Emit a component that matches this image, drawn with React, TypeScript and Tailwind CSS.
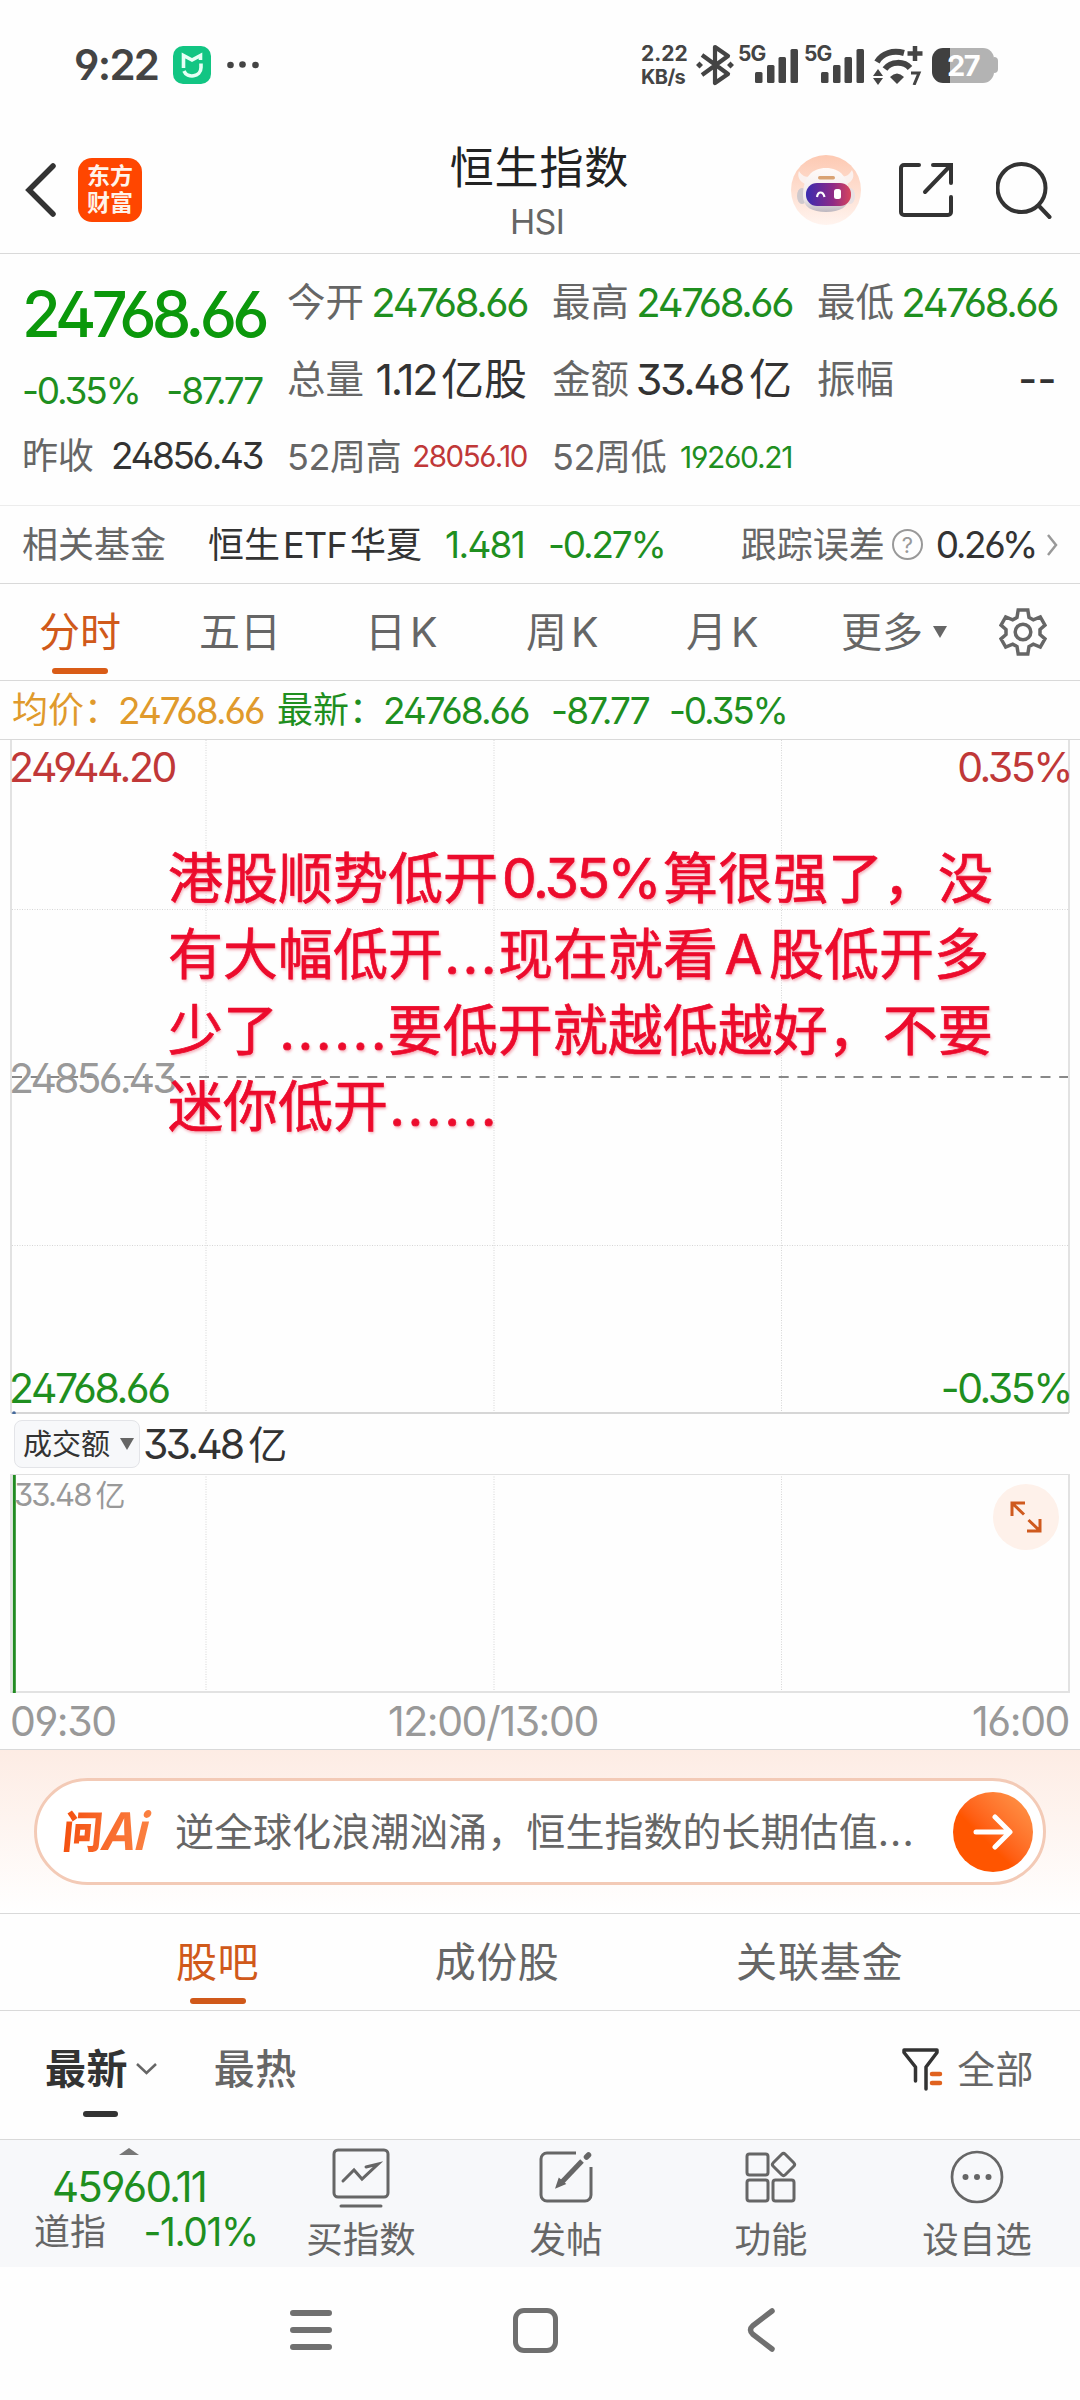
import type { ReactNode } from 'react';
import clsx from 'clsx';

type CellProps = {
  label: string;
  children: ReactNode;
  className?: string;
  small?: boolean;
};

const periods = [
  { label: '日', className: 'w-[161px]' },
  { label: '周', className: 'w-[160px]' },
  { label: '月', className: 'w-[155px]' },
];

function StatusBar() {
  return (
    <div className="flex h-[130px] items-center pl-[74px] pr-[82px] text-[#444]">
      <span className="w-[99px] text-[42px] font-semibold tracking-[-0.04em]">9:22</span>
      <svg className="h-[38px] w-[38px]" viewBox="0 0 38 38">
        <rect width="38" height="38" rx="10" fill="#12c583" />
        <path d="M10.500 22V9.500l8.500 4.500 8.500-4.500V14" fill="none" stroke="#e6fff5" strokeWidth="3.600" />
        <path d="M28 17.500v4c0 10-14 11-17 3.500" fill="none" stroke="#e6fff5" strokeWidth="3.600" />
      </svg>
      <svg className="ml-4 h-[8px] w-[32px]" viewBox="0 0 32 8" fill="currentColor">
        <circle cx="3.500" cy="4" r="3.300" />
        <circle cx="15.500" cy="3.500" r="3.300" />
        <circle cx="28.500" cy="4" r="3.300" />
      </svg>

      <div className="ml-auto flex items-center">
        <div className="flex w-[55px] flex-col gap-[3px] whitespace-nowrap font-bold">
          <span className="text-[21px]">2.22</span>
          <span className="text-[20px] tracking-[-0.03em]">KB/s</span>
        </div>
        <svg className="h-[42px] w-[38px]" viewBox="0 0 38 42" fill="none" stroke="currentColor" strokeWidth="4.200" strokeLinejoin="round">
          <path d="M6 11l26 19-13 9V3l13 9L6 31" />
          <path d="M0 21l3.500-3.500L7 21l-3.500 3.500zM31 21l3.500-3.500L38 21l-3.500 3.500z" fill="currentColor" stroke="none" />
        </svg>
        <Signal className="ml-[4px] w-[60px]" />
        <Signal className="ml-[6px] w-[60px]" />
        <svg className="ml-[9px] h-[40px] w-[50px]" viewBox="0 0 50 40" fill="none" stroke="currentColor">
          <path d="M4 17C9 8 20 5 31 8" strokeWidth="6" />
          <path d="M12 24c6-8 19-8 25-1" strokeWidth="6" />
          <path d="M17 32q7-7 14 0l-7 7z" fill="currentColor" stroke="none" />
          <path d="M42 1v15M34.500 8.500h15" strokeWidth="4.500" />
          <path d="M0 31l5-7 5 7zM0 33l5 7 5-7z" fill="currentColor" stroke="none" />
          <path d="M38 28h8l-5 12" strokeWidth="3" />
        </svg>
        <div className="ml-[9px] flex items-center">
          <div className="flex h-[35px] w-[62px] items-center justify-center rounded-[11px] bg-[linear-gradient(90deg,#404040_0_18px,#b3b3b3_18px)] text-[29px] font-bold tracking-[-0.05em] text-white">
            27
          </div>
          <div className="h-4 w-[4px] rounded-r-sm bg-[#b3b3b3]" />
        </div>
      </div>
    </div>
  );
}

function Signal({ className }: { className: string }) {
  return (
    <div className={clsx('relative h-[38px]', className)}>
      <span className="absolute left-0 top-[-3px] text-[21px] font-bold tracking-[-0.04em]">5G</span>
      <svg className="h-[38px] w-[60px]" viewBox="0 0 60 38" fill="currentColor">
        <rect x="17" y="26" width="7.500" height="11" rx="1.500" />
        <rect x="29" y="19" width="7.500" height="18" rx="1.500" />
        <rect x="40.500" y="11" width="7.500" height="26" rx="1.500" />
        <rect x="52.500" y="3" width="7.500" height="34" rx="1.500" />
      </svg>
    </div>
  );
}

function Robot() {
  return (
    <svg className="h-[72px] w-[72px]" viewBox="0 0 72 72">
      <defs>
        <linearGradient id="halo" x1="0" y1="0" x2="0" y2="1">
          <stop offset="0" stopColor="#fdc9b2" />
          <stop offset="1" stopColor="#fff4ef" />
        </linearGradient>
        <linearGradient id="visor" x1="0" y1="0" x2="1" y2="0">
          <stop offset="0" stopColor="#3a2cb0" />
          <stop offset="0.600" stopColor="#8e2a86" />
          <stop offset="1" stopColor="#d8455c" />
        </linearGradient>
        <linearGradient id="shell" x1="0" y1="0" x2="0" y2="1">
          <stop offset="0" stopColor="#fffaf8" />
          <stop offset="0.700" stopColor="#efe9ea" />
          <stop offset="1" stopColor="#bdb7bf" />
        </linearGradient>
      </defs>
      <circle cx="36" cy="36" r="35" fill="url(#halo)" />
      <path d="M15 30c-6-3-8-8-6-13 3 5 6 6 12 6zM57 30c6-3 8-8 5-14-3 5-6 7-12 7z" fill="#fbf1ee" />
      <ellipse cx="12" cy="42" rx="5" ry="8" fill="#cfc9cd" />
      <ellipse cx="60" cy="42" rx="5" ry="8" fill="#e8e0e2" />
      <path d="M13 42c0-19 9-28 23-28s23 9 23 28c0 11-9 16-23 16s-23-5-23-16z" fill="url(#shell)" />
      <rect x="28" y="22" width="17" height="3.500" rx="1.700" fill="#d9a273" />
      <rect x="16" y="29" width="45" height="23" rx="11" fill="url(#visor)" />
      <path d="M27 43c1-6 6-6 7.500 0" fill="none" stroke="#fff" strokeWidth="2.200" />
      <rect x="44" y="35" width="7" height="10" rx="2.500" fill="#fff" />
    </svg>
  );
}

function Header() {
  return (
    <header className="flex h-[124px] items-center border-b border-[#d9d9d9] pb-[3px] pl-[25px] pr-[28px]">
      <svg className="h-[54px] w-[32px]" viewBox="0 0 32 54" fill="none" stroke="#333" strokeWidth="5.500">
        <path d="M28 3L4 27l24 24" strokeLinecap="round" />
      </svg>
      <div className="ml-[21px] flex h-[64px] w-[64px] flex-col items-center justify-center gap-[4px] rounded-[14px] bg-[#ff4600] text-[23px] font-bold text-[#fff3ea]">
        <span>东方</span>
        <span>财富</span>
      </div>
      <div className="ml-[309px] flex w-[177px] flex-col items-center whitespace-nowrap pt-[5px]">
        <h1 className="text-[44px] tracking-[0.02em] text-[#222]">恒生指数</h1>
        <span className="mt-[15px] pr-[5px] text-[34px] tracking-[-0.02em] text-[#666]">HSI</span>
      </div>
      <div className="ml-auto flex items-center">
        <Robot />
        <svg className="ml-[37px] h-[54px] w-[54px]" viewBox="0 0 54 54" fill="none" stroke="#333" strokeWidth="4" strokeLinecap="round">
          <path d="M20 2H5a3 3 0 0 0-3 3v44a3 3 0 0 0 3 3h44a3 3 0 0 0 3-3V34" />
          <path d="M34 2h18v18M26 29L50 4" />
        </svg>
        <svg className="ml-[43px] h-[57px] w-[56px]" viewBox="0 0 56 57" fill="none" stroke="#333" strokeWidth="4" strokeLinecap="round">
          <circle cx="25.500" cy="26" r="24" />
          <path d="M43 44l10.500 11" />
        </svg>
      </div>
    </header>
  );
}

function Cell({ label, children, className, small }: CellProps) {
  return (
    <div className={clsx('flex h-[77px] items-center justify-between whitespace-nowrap', className)}>
      <span className={clsx('text-[#666]', small ? 'text-[36px] tracking-[-0.01em]' : 'text-[38.500px]')}>{label}</span>
      {children}
    </div>
  );
}

function Quote() {
  return (
    <section className="grid h-[252px] grid-cols-4 gap-[25px] border-b border-[#ececec] pl-[22px] pr-[23px] pt-[10px] text-[#333]">
      <div>
        <div className="flex h-[100px] items-center text-[63px] font-medium tracking-[-0.075em] text-[#0b980b]">24768.66</div>
        <div className="flex h-[53px] items-center justify-between text-[37px] tracking-[-0.06em] text-[#1f8f1f]">
          <span>-0.35%</span>
          <span>-87.77</span>
        </div>
        <Cell label="昨收" small>
          <span className="text-[37px] tracking-[-0.065em]">24856.43</span>
        </Cell>
      </div>
      <div>
        <Cell label="今开">
          <span className="text-[40px] tracking-[-0.06em] text-[#1f8f1f]">24768.66</span>
        </Cell>
        <Cell label="总量">
          <span className="text-[43px] tracking-[-0.055em]">
            1.12<span className="ml-[5px] tracking-normal">亿股</span>
          </span>
        </Cell>
        <Cell label="52周高" small>
          <span className="text-[29.500px] tracking-[-0.05em] text-[#c03838]">28056.10</span>
        </Cell>
      </div>
      <div>
        <Cell label="最高">
          <span className="text-[40px] tracking-[-0.06em] text-[#1f8f1f]">24768.66</span>
        </Cell>
        <Cell label="金额">
          <span className="text-[43px] tracking-[-0.055em]">
            33.48<span className="ml-[6px] tracking-normal">亿</span>
          </span>
        </Cell>
        <Cell label="52周低" small>
          <span className="text-[30px] tracking-[-0.045em] text-[#1f8f1f]">19260.21</span>
        </Cell>
      </div>
      <div>
        <Cell label="最低">
          <span className="text-[40px] tracking-[-0.06em] text-[#1f8f1f]">24768.66</span>
        </Cell>
        <Cell label="振幅">
          <span className="text-[41px] font-medium tracking-[0.01em]">--</span>
        </Cell>
      </div>
    </section>
  );
}

function FundRow() {
  return (
    <div className="flex h-[78px] items-center whitespace-nowrap border-b border-[#d9d9d9] pl-[22px] pr-[22px] text-[36px] text-[#333]">
      <span className="w-[186px] text-[#666]">相关基金</span>
      <span className="w-[237px]">
        恒生<span className="px-[3px] tracking-[-0.02em]">ETF</span>华夏
      </span>
      <span className="w-[103px] text-[37px] tracking-[-0.045em] text-[#1f8f1f]">1.481</span>
      <span className="text-[37px] tracking-[-0.06em] text-[#1f8f1f]">-0.27%</span>
      <span className="ml-auto text-[#666]">跟踪误差</span>
      <span className="ml-[7px] flex h-[31px] w-[31px] items-center justify-center rounded-full border-[2.500px] border-[#999] text-[22px] text-[#999]">?</span>
      <span className="ml-[13px] text-[37px] tracking-[-0.065em]">0.26%</span>
      <svg className="ml-[11px] h-[22px] w-[11px]" viewBox="0 0 11 22" fill="none" stroke="#999" strokeWidth="2.500">
        <path d="M1 1l8 10-8 10" />
      </svg>
    </div>
  );
}

function PeriodTabs() {
  return (
    <nav className="flex h-[97px] items-center whitespace-nowrap border-b border-[#d9d9d9] pl-[39px] text-[41px] text-[#666]">
      <div className="relative text-[#d0591a]">
        分时
        <span className="absolute left-[13px] top-[56px] h-[6px] w-[56px] rounded-full bg-[#d95c17]" />
      </div>
      <span className="ml-[78px] w-[166px]">五日</span>
      {periods.map((p) => (
        <span key={p.label} className={p.className}>
          {p.label}
          <span className="ml-[4px]">K</span>
        </span>
      ))}
      <span>更多</span>
      <svg className="ml-[10px] h-[12px] w-[14px]" viewBox="0 0 14 12" fill="#666">
        <path d="M0 0h14L7 12z" />
      </svg>
      <svg className="ml-[52px] h-[48px] w-[48px]" viewBox="0 0 48 48" fill="none" stroke="#666" strokeWidth="3.500">
        <path d="M19.200 2h9.600l1.200 7.500 4.300 2.400 7-2.900 4.700 8.200-5 4.300v5l5 4.300-4.700 8.200-7-2.900-4.300 2.400-1.200 7.500h-9.600L18 38.500l-4.300-2.400-7 2.900L2 30.800l5-4.300v-5l-5-4.300L6.700 9l7 2.900L18 9.500z" />
        <circle cx="24" cy="24" r="7.800" />
      </svg>
    </nav>
  );
}

function PriceChart() {
  return (
    <div className="relative mx-[10px] h-[674px] text-[41px] tracking-[-0.06em]">
      <svg className="block h-full w-full" viewBox="0 0 1060 674" fill="none">
        <g stroke="#d6d6d6" strokeDasharray="1 1.500">
          <path d="M196 0v672M484 0v672M771.500 0v672M2 169.500h1056M2 505.500h1056" />
        </g>
        <path d="M2 337h1056" stroke="#888" strokeWidth="2" strokeDasharray="10 8.700" />
        <path d="M1 0v673M1059 0v673" stroke="#e2e2e2" strokeWidth="2" />
        <path d="M1 673h1058" stroke="#d6d6d6" strokeWidth="2" />
        <circle cx="4" cy="673" r="1.800" fill="#456a9c" />
      </svg>
      <span className="absolute left-[-1px] top-[7px] text-[#c03838]">24944.20</span>
      <span className="absolute right-[-1px] top-[7px] text-[#c03838]">0.35%</span>
      <span className="absolute left-[-1px] top-[318px] tracking-[-0.07em] text-[#999]">24856.43</span>
      <span className="absolute left-[-1px] top-[628px] text-[#1f8f1f]">24768.66</span>
      <span className="absolute right-[-1px] top-[628px] text-[#1f8f1f]">-0.35%</span>

      <div className="absolute left-[158px] top-[100px] whitespace-nowrap text-[55px] leading-[76px] tracking-normal text-[#ec0b2c] [-webkit-text-stroke:0.700px_#ec0b2c] [text-shadow:1px_2px_3px_#f3a9b4]">
        <p>
          港股顺势低开<span className="inline-block w-[165px] text-center tracking-[-0.045em]">0.35%</span>算很强了，没
        </p>
        <p>
          有大幅低开
          <Dots count={3} />
          现在就看<span className="inline-block w-[51px] text-center">A</span>股低开多
        </p>
        <p>
          少了
          <Dots count={6} />
          要低开就越低越好，不要
        </p>
        <p>
          迷你低开
          <Dots count={6} />
        </p>
      </div>
    </div>
  );
}

function Dots({ count }: { count: number }) {
  return (
    <span className="inline-flex">
      {Array.from({ length: count }, (_, i) => (
        <span key={i} className="w-[18.300px] text-center">
          .
        </span>
      ))}
    </span>
  );
}

function VolumeChart() {
  return (
    <section>
      <div className="flex h-[60px] items-center pl-[14px] text-[#333]">
        <button className="flex h-[48px] w-[126px] items-center gap-[10px] rounded-lg border border-[#e3e4e8] bg-[#f7f8fa] pl-[8px] text-[29px]">
          <span>成交额</span>
          <svg className="h-[12px] w-[14px]" viewBox="0 0 14 12" fill="#666">
            <path d="M0 0h14L7 12z" />
          </svg>
        </button>
        <span className="ml-[3px] whitespace-nowrap text-[41px] tracking-[-0.07em]">
          33.48<span className="ml-[6px] text-[39px]">亿</span>
        </span>
      </div>
      <div className="relative mx-[10px] h-[219px]">
        <svg className="block h-full w-full" viewBox="0 0 1060 219" fill="none">
          <path d="M196 0v217M484 0v217M771.500 0v217" stroke="#d6d6d6" strokeDasharray="1 1.500" />
          <path d="M1 .5h1058" stroke="#e0e0e0" />
          <path d="M1 0v218h1058V0" stroke="#e2e2e2" strokeWidth="2" />
          <path d="M4.300 1v218" stroke="#228b22" strokeWidth="3" />
        </svg>
        <span className="absolute left-[4px] top-[5px] whitespace-nowrap text-[31px] tracking-[-0.06em] text-[#999]">
          33.48<span className="ml-[5px] text-[30px]">亿</span>
        </span>
        <div className="absolute right-[11px] top-[10px] flex h-[66px] w-[66px] items-center justify-center rounded-full bg-[#fef1ea]">
          <svg className="h-[32px] w-[32px]" viewBox="0 0 32 32" fill="none" stroke="#cf5a1e" strokeWidth="3">
            <path d="M2 15V2h13M2.500 2.500L14 13.500M30 18v12H17M29.500 29.500L18.500 19" />
          </svg>
        </div>
      </div>
      <div className="flex h-[57px] items-center border-b border-[#d9d9d9] pl-[10px] pr-[11px] text-[41px] tracking-[-0.035em] text-[#999]">
        <span className="w-[378px]">09:30</span>
        <span>12:00/13:00</span>
        <span className="ml-auto">16:00</span>
      </div>
    </section>
  );
}

function AskAi() {
  return (
    <section className="flex h-[164px] items-center border-b border-[#d9d9d9] bg-gradient-to-b from-[#fdece4] to-white px-[34px]">
      <div className="flex h-[107px] w-full items-center rounded-full border-[3px] border-[#f3cab6] bg-white pl-[26px] pr-[10px]">
        <div className="w-[112px]">
          <span className="inline-flex origin-left scale-x-90 -skew-x-6 items-center bg-gradient-to-r from-[#f4500c] to-[#fb8242] bg-clip-text text-transparent">
            <span className="text-[44px] font-black">问</span>
            <span className="pr-1 text-[52px] font-bold italic tracking-[-0.03em]">Ai</span>
          </span>
        </div>
        <span className="whitespace-nowrap text-[39px] tracking-[0.001em] text-[#666]">
          逆全球化浪潮汹涌，恒生指数的长期估值<span className="tracking-[0.03em]">...</span>
        </span>
        <span className="ml-auto flex h-[80px] w-[80px] items-center justify-center rounded-full bg-gradient-to-tr from-[#ff5500] from-40% to-[#ff9a4d]">
          <svg className="h-[36px] w-[40px]" viewBox="0 0 40 36" fill="none" stroke="#fff" strokeWidth="5" strokeLinecap="round" strokeLinejoin="round">
            <path d="M3 18h33M22 3l15 15-15 15" />
          </svg>
        </span>
      </div>
    </section>
  );
}

function Community() {
  return (
    <section className="whitespace-nowrap text-[41px] tracking-[0.01em] text-[#666]">
      <div className="flex h-[97px] items-center border-b border-[#d9d9d9] pl-[176px]">
        <div className="relative text-[#d0591a]">
          股吧
          <span className="absolute left-[14px] top-[56px] h-[6px] w-[56px] rounded-full bg-[#d0591a]" />
        </div>
        <span className="ml-[176px]">成份股</span>
        <span className="ml-[177px] tracking-[0.02em]">关联基金</span>
      </div>
      <div className="flex h-[129px] items-center border-b border-[#d9d9d9] pb-[12px] pl-[45px] pr-[46px]">
        <div className="relative font-bold text-[#333]">
          最新
          <span className="absolute left-[38px] top-[62px] h-[6px] w-[35px] rounded-full bg-[#333]" />
        </div>
        <svg className="ml-[8px] h-[12px] w-[21px]" viewBox="0 0 21 12" fill="none" stroke="#666" strokeWidth="2.500">
          <path d="M1 1l9.500 9L20 1" />
        </svg>
        <span className="ml-[57px] font-medium">最热</span>
        <svg className="ml-auto h-[43px] w-[41px]" viewBox="0 0 41 43" fill="none">
          <path d="M13.500 33V19L2 4.500V2h33v2.500L24 19v22" stroke="#333" strokeWidth="3.500" strokeLinecap="round" strokeLinejoin="round" />
          <path d="M30 26h8M30 35h8" stroke="#e0621f" strokeWidth="4.500" strokeLinecap="round" />
        </svg>
        <span className="ml-[14px] text-[38px]">全部</span>
      </div>
    </section>
  );
}

function Action({ label, className, children }: { label: string; className: string; children: ReactNode }) {
  return (
    <div className={clsx('flex flex-col items-center pt-[6px] text-[36.500px] text-[#666]', className)}>
      <svg className="h-[62px] w-[60px]" viewBox="0 0 60 62" fill="none" stroke="#666" strokeWidth="3">
        {children}
      </svg>
      <span className="mt-[14px] whitespace-nowrap">{label}</span>
    </div>
  );
}

function ActionBar() {
  return (
    <footer className="flex h-[127px] bg-[#f7f8fa]">
      <div className="flex w-[258px] flex-col items-center whitespace-nowrap pt-[8px]">
        <svg className="h-[7px] w-[20px]" viewBox="0 0 20 7" fill="#777">
          <path d="M0 7l10-7 10 7z" />
        </svg>
        <span className="mt-[11px] text-[42px] tracking-[-0.045em] text-[#1f8f1f]">45960.11</span>
        <div className="mt-[4px] flex w-full items-center justify-between pl-[34px] text-[36px] text-[#666]">
          <span>道指</span>
          <span className="text-[39px] tracking-[-0.035em] text-[#1f8f1f]">-1.01%</span>
        </div>
      </div>
      <Action label="买指数" className="w-[206px]">
        <rect x="3" y="4" width="54" height="47" rx="4" />
        <path d="M10 60h40" strokeLinecap="round" />
        <path d="M12 35l11-11 8 9 16-15-12 3" strokeLinecap="round" />
      </Action>
      <Action label="发帖" className="w-[204px]">
        <path d="M40 7H11a6 6 0 0 0-6 6v36a6 6 0 0 0 6 6h38a6 6 0 0 0 6-6V21" />
        <path d="M26 36l20-21" strokeWidth="5" />
        <path d="M21.500 40l2-6 4 3.500z" fill="#666" />
        <path d="M50.500 11l2-2" strokeWidth="5.500" strokeLinecap="round" />
      </Action>
      <Action label="功能" className="w-[206px]">
        <rect x="6" y="8" width="21" height="21" rx="2.500" />
        <rect x="6" y="34" width="21" height="21" rx="2.500" />
        <rect x="32" y="34" width="21" height="21" rx="2.500" />
        <rect x="34" y="10" width="17" height="17" rx="2.500" transform="rotate(45 42.500 18.500)" />
      </Action>
      <Action label="设自选" className="w-[206px]">
        <circle cx="30" cy="31" r="25" strokeWidth="2.700" />
        <g fill="#666" stroke="none">
          <circle cx="18.500" cy="31" r="3" />
          <circle cx="30" cy="31" r="3" />
          <circle cx="41.500" cy="31" r="3" />
        </g>
      </Action>
    </footer>
  );
}

function SystemNav() {
  return (
    <div className="flex h-[133px] items-center pb-[7px] pl-[290px]">
      <svg className="h-[42px] w-[42px]" viewBox="0 0 42 42" stroke="#707070" strokeWidth="6" strokeLinecap="round">
        <path d="M3 4h36M3 21h36M3 38h36" />
      </svg>
      <div className="ml-[181px] h-[45px] w-[45px] rounded-[11px] border-[5px] border-[#707070]" />
      <svg className="ml-[189px] h-[46px] w-[29px]" viewBox="0 0 29 46" fill="none" stroke="#707070" strokeWidth="5.500" strokeLinecap="round">
        <path d="M25 4L6 18.500q-5 4.500 0 9L25 42" />
      </svg>
    </div>
  );
}

export default function App() {
  return (
    <main className="h-[2400px] w-[1080px] overflow-hidden bg-[#fefefe] font-['Inter','Noto_Sans_CJK_SC',sans-serif] leading-none [font-feature-settings:'ss01','cv03','cv04']">
      <StatusBar />
      <Header />
      <Quote />
      <FundRow />
      <PeriodTabs />
      <div className="flex h-[59px] items-center whitespace-nowrap border-b border-[#d9d9d9] pl-[12px] text-[36px] text-[#1f8f1f]">
        <span className="w-[106px] text-[#e09a2c]">均价：</span>
        <span className="w-[159px] text-[37px] tracking-[-0.055em] text-[#e09a2c]">24768.66</span>
        <span className="w-[106px]">最新：</span>
        <span className="w-[168px] text-[37px] tracking-[-0.055em]">24768.66</span>
        <span className="w-[118px] text-[37px] tracking-[-0.05em]">-87.77</span>
        <span className="text-[37px] tracking-[-0.06em]">-0.35%</span>
      </div>
      <PriceChart />
      <VolumeChart />
      <AskAi />
      <Community />
      <ActionBar />
      <SystemNav />
    </main>
  );
}
